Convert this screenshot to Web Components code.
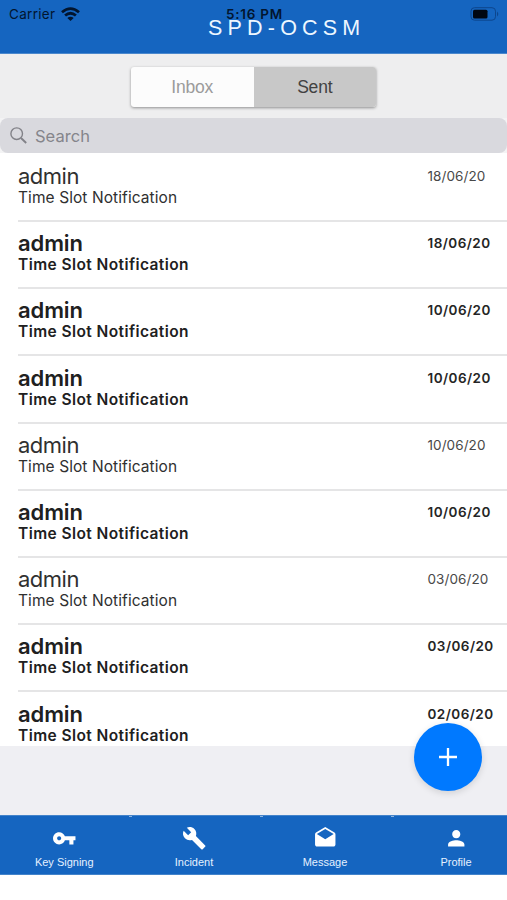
<!DOCTYPE html>
<html lang="en">
<head>
<meta charset="utf-8">
<title>SPD-OCSM</title>
<style>
body{margin:0;background:#fff;font-family:Inter,"Liberation Sans",sans-serif}
</style>
</head>
<body>
<mail-app></mail-app>
<script>
const define=(name,html,init)=>customElements.define(name,class extends HTMLElement{
  connectedCallback(){
    if(this.shadowRoot)return;
    const t=document.createElement('template');
    t.innerHTML=html;
    this.attachShadow({mode:'open'}).append(t.content.cloneNode(true));
    if(init)init(this,this.shadowRoot);
  }
});

define('app-header',`<style>
:host{display:block;position:relative;height:54px;box-sizing:border-box;background:#1565c0;border-bottom:1px solid #4a88cd;color:#02152f}
.status{display:grid;grid-template-columns:1fr auto 1fr;align-items:center;height:27px;padding:0 7px 0 9px;font-size:13.5px;box-sizing:border-box}
.left{display:flex;align-items:center;gap:6px;letter-spacing:.3px}
.time{font-weight:600;font-size:13.5px;letter-spacing:.75px}
.right{justify-self:end;display:flex}
h1{position:absolute;left:208px;top:16px;margin:0;font:400 21.5px/25px "Liberation Sans",sans-serif;letter-spacing:5.2px;color:#edf7ff;white-space:nowrap}
svg{display:block}
</style>
<div class="status"><span class="left"><span>Carrier</span><svg width="19" height="14" viewBox="0 0 19 14" fill="none" stroke="#02152f" stroke-width="2.8"><path d="M1 5.2Q9.5-2 18 5.2M4.1 8.5q5.4-4.6 10.8 0"/><path d="M6.3 10.9q3.2-2.5 6.4 0l-3.2 3z" fill="#02152f" stroke="none"/></svg></span>
<span class="time">5:16 PM</span>
<span class="right"><svg width="30" height="14" viewBox="0 0 30 14"><rect x="1" y=".7" width="24.5" height="12.5" rx="3.5" fill="none" stroke="#0d468d"/><rect x="3" y="2.7" width="14.5" height="8.7" rx="1.5" fill="#000713"/><path d="M27 4.5q2.6 2.4 0 5z" fill="#0d468d"/></svg></span></div>
<h1>SPD-OCSM</h1>`);

define('segment-control',`<style>
:host{display:flex;justify-content:center;height:64.4px;box-sizing:border-box;padding-top:13px;background:#eeeeef}
div{display:grid;grid-template-columns:122.5px 122.5px;width:245px;height:39.5px;border-radius:3px;box-shadow:0 1px 3px #0006;overflow:hidden;background:#fcfcfc;font:17.5px/40px "Liberation Sans",sans-serif;text-align:center}
.a{color:#9b9b9b;letter-spacing:-.2px}.b{background:#c8c8c8;color:#424242;letter-spacing:-.2px}
</style><div><span class="a">Inbox</span><span class="b">Sent</span></div>`);

define('search-field',`<style>
:host{display:block;background:#f3f3f4;height:34.4px}
div{display:flex;align-items:center;height:100%;border-radius:8px;background:#d9d9de;padding-left:10px;gap:8px;color:#85858b;font-size:16.5px;letter-spacing:.03px}
</style><div><svg width="17" height="17" viewBox="0 0 17 17" fill="none" stroke="#828288" stroke-width="1.4"><circle cx="6.7" cy="6.7" r="5.8"/><path d="M11 11l5.2 5" stroke-width="1.9"/></svg><span>Search</span></div>`);

define('mail-row',`<style>
:host{display:flex;justify-content:space-between;box-sizing:border-box;height:67.2px;margin-left:18px;padding-top:12.3px;color:#303030;background:linear-gradient(#e5e5e6,#e5e5e6) 0 0/100% 2px no-repeat}
:host([first]){background:none}
.from{font-size:22px;line-height:23px;letter-spacing:-.5px}
.subject{font-size:15.5px;line-height:19px;letter-spacing:.08px}
.date{width:79.5px;font-size:13.5px;line-height:23px;letter-spacing:.08px;color:#484848;white-space:nowrap}
:host([unread]){color:#202020;font-weight:600}
:host([unread]) .from{letter-spacing:-.1px}
:host([unread]) .subject{letter-spacing:.42px}
:host([unread]) .date{color:#252525;letter-spacing:.45px}
</style><div><div class="from"><slot></slot></div><div class="subject">Time Slot Notification</div></div><div class="date"></div>`,
(el,r)=>{r.querySelector('.date').textContent=el.getAttribute('date')});

define('compose-button',`<style>
:host{display:grid;place-items:center;width:68px;height:68px;border-radius:50%;background:#0079ff;box-shadow:0 2px 7px #0002}
</style><svg width="20" height="20" viewBox="0 0 20 20" stroke="#fff" stroke-width="2.3"><path d="M10 1v18M1 10h18"/></svg>`);

const icons={
key:'<path d="M12.65 10C11.83 7.67 9.61 6 7 6c-3.31 0-6 2.69-6 6s2.69 6 6 6c2.61 0 4.83-1.67 5.65-4H17v4h4v-4h2v-4H12.65zM7 14c-1.1 0-2-.9-2-2s.9-2 2-2 2 .9 2 2-.9 2-2 2z"/>',
wrench:'<path d="M22.7 19l-9.1-9.1c.9-2.3.4-5-1.5-6.9-2-2-5-2.4-7.4-1.3L9 6 6 9 1.6 4.7C.4 7.1.9 10.1 2.9 12.1c1.9 1.9 4.6 2.4 6.9 1.5l9.1 9.1c.4.4 1 .4 1.4 0l2.3-2.3c.5-.4.5-1.1.1-1.4z"/>',
mail:'<path d="M21.99 8c0-.72-.37-1.35-.94-1.7L12 1 2.95 6.3C2.38 6.65 2 7.28 2 8v10c0 1.1.9 2 2 2h16c1.1 0 2-.9 2-2l-.01-10zM12 13L3.74 7.84 12 3l8.26 4.84L12 13z"/>',
person:'<path d="M12 12c2.21 0 4-1.79 4-4s-1.79-4-4-4-4 1.79-4 4 1.79 4 4 4zm0 2c-2.67 0-8 1.34-8 4v2h16v-2c0-2.66-5.33-4-8-4z"/>'};
define('tab-item',`<style>
:host{display:flex;flex-direction:column;align-items:center;padding-top:9.5px;color:#e5f1ff;font:11px/14px "Liberation Sans",sans-serif}
svg{display:block;fill:#fff;margin-bottom:4.5px}
</style><svg height="24.5" viewBox="0 0 24 24"></svg><slot></slot>`,
(el,r)=>{const s=r.querySelector('svg');s.innerHTML=icons[el.getAttribute('icon')];s.setAttribute('width',24.5)});

define('tab-bar',`<style>
:host{display:grid;grid-template-columns:128.5px repeat(3,131px);overflow:hidden;height:60px;box-sizing:border-box;background:#1565c0;border-top:1px solid #4383ca;border-bottom:1px solid #4383ca}
::slotted(:not(:first-child)){background:linear-gradient(#8db4e0,#8db4e0) 0 0/3px 1px no-repeat}
</style><slot></slot>`);

define('mail-app',`<style>
:host{display:block;position:relative;width:507px;height:900px;overflow:hidden;background:#fff}
.list{height:593.2px;overflow:hidden;background:#fff}
.rest{height:69.5px;background:#efeff3}
compose-button{position:absolute;left:414px;top:723px}
</style>
<app-header></app-header><segment-control></segment-control><search-field></search-field>
<div class="list"></div><div class="rest"></div>
<tab-bar><tab-item icon="key">Key Signing</tab-item><tab-item icon="wrench">Incident</tab-item><tab-item icon="mail">Message</tab-item><tab-item icon="person">Profile</tab-item></tab-bar>
<compose-button></compose-button>`,
(el,r)=>{r.querySelector('.list').innerHTML=[['18/06/20',0],['18/06/20',1],['10/06/20',1],['10/06/20',1],['10/06/20',0],['10/06/20',1],['03/06/20',0],['03/06/20',1],['02/06/20',1]].map(([d,u],i)=>`<mail-row date="${d}"${u?' unread':''}${i?'':' first'}>admin</mail-row>`).join('')});
</script>
</body>
</html>
